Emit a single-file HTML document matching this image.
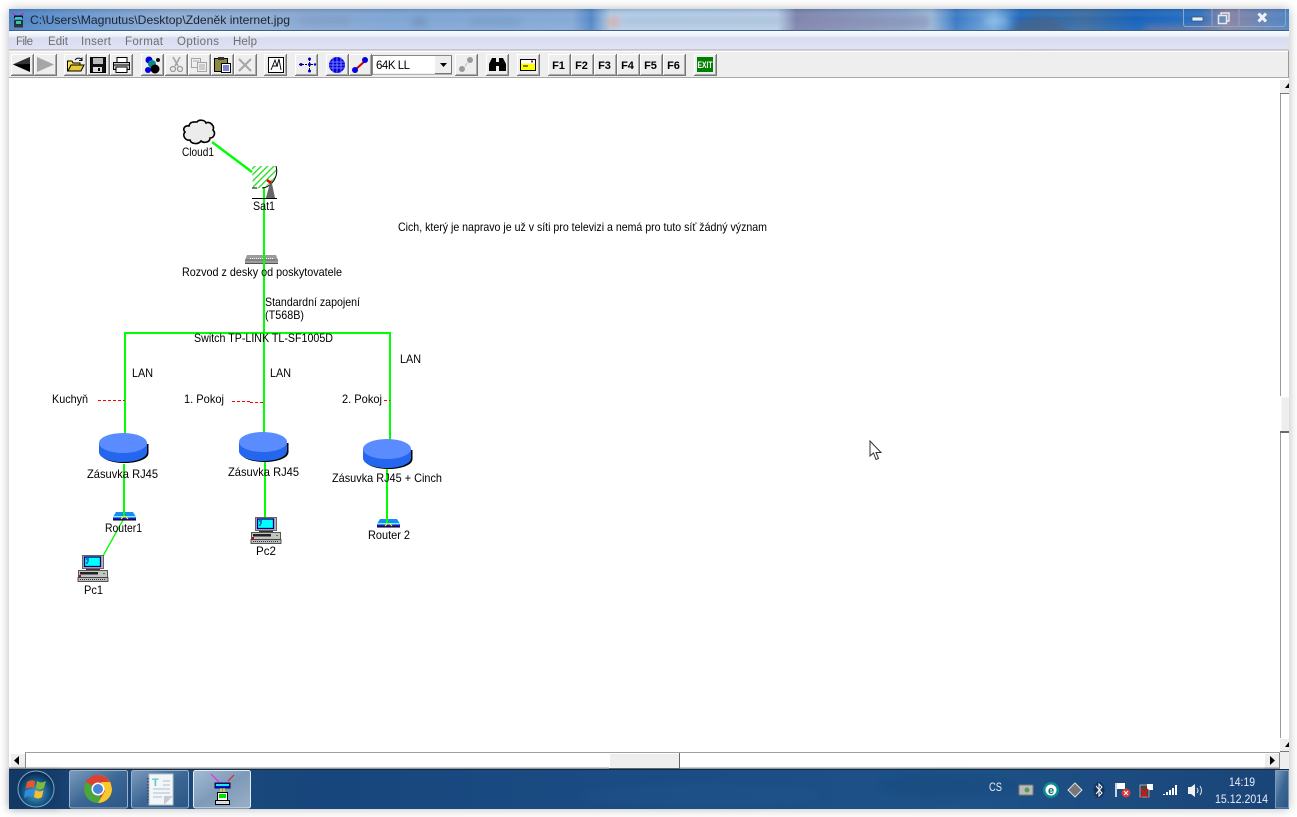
<!DOCTYPE html>
<html><head><meta charset="utf-8"><title>Network diagram</title>
<style>
html,body{margin:0;padding:0;background:#fff;width:1297px;height:817px;overflow:hidden}
#shadow{position:absolute;left:9px;top:9px;width:1280px;height:800px;box-shadow:0 0 10px rgba(0,0,0,.28)}
svg{position:absolute;left:0;top:0}
text{font-family:"Liberation Sans",sans-serif;font-size:11px;fill:#000;white-space:pre}
.d{font-size:11.6px}
.m{fill:#6f6f6f;font-size:11.5px}
.f{font-size:11px;font-weight:bold;text-anchor:middle}
.t{fill:#e8eef6;font-size:12px}
</style></head><body>
<div id="shadow"></div>
<svg width="1297" height="817" viewBox="0 0 1297 817" xmlns="http://www.w3.org/2000/svg">
<defs>
<linearGradient id="tb" x1="0" x2="1" y1="0" y2="0">
<stop offset="0" stop-color="#4a82c4"/><stop offset=".06" stop-color="#6c99d0"/><stop offset=".13" stop-color="#92aed4"/><stop offset=".2" stop-color="#8dabd2"/><stop offset=".3" stop-color="#7fa5d4"/><stop offset=".44" stop-color="#86aad6"/><stop offset=".455" stop-color="#5488c6"/><stop offset=".47" stop-color="#b5cfe9"/><stop offset=".6" stop-color="#b8cfe7"/><stop offset=".615" stop-color="#7e84ac"/><stop offset=".7" stop-color="#8ea8cc"/><stop offset=".72" stop-color="#9dbad9"/><stop offset=".74" stop-color="#3a7ac6"/><stop offset=".77" stop-color="#74a8dc"/><stop offset=".79" stop-color="#2069bd"/><stop offset=".84" stop-color="#3d6c9f"/><stop offset=".88" stop-color="#1763bb"/><stop offset=".93" stop-color="#2a70c0"/><stop offset=".95" stop-color="#8d84a0"/><stop offset="1" stop-color="#4f84c4"/>
</linearGradient>
<linearGradient id="tbv" x1="0" x2="0" y1="0" y2="1"><stop offset="0" stop-color="#10407a" stop-opacity=".22"/><stop offset=".4" stop-color="#fff" stop-opacity="0"/><stop offset="1" stop-color="#fff" stop-opacity=".08"/></linearGradient>
<linearGradient id="mn" x1="0" x2="0" y1="0" y2="1"><stop offset="0" stop-color="#fbfcfe"/><stop offset=".3" stop-color="#e9edf8"/><stop offset=".35" stop-color="#d7dcf0"/><stop offset="1" stop-color="#dfe3f3"/></linearGradient>
<linearGradient id="task" x1="0" x2="1" y1="0" y2="0"><stop offset="0" stop-color="#143a68"/><stop offset=".1" stop-color="#1c4a7e"/><stop offset=".25" stop-color="#17467c"/><stop offset=".5" stop-color="#1a4c83"/><stop offset=".75" stop-color="#1d5288"/><stop offset="1" stop-color="#1a4477"/></linearGradient>
<linearGradient id="tbtn" x1="0" x2="1" y1="0" y2="1"><stop offset="0" stop-color="#7c9cbd"/><stop offset=".5" stop-color="#3c6794"/><stop offset="1" stop-color="#2a5688"/></linearGradient>
<linearGradient id="tbtna" x1="0" x2="1" y1="0" y2="1"><stop offset="0" stop-color="#a4bbd2"/><stop offset=".5" stop-color="#7d9ab8"/><stop offset="1" stop-color="#9ab0c6"/></linearGradient>
<radialGradient id="orb" cx=".5" cy=".6" r=".55"><stop offset="0" stop-color="#4fa5c8"/><stop offset=".7" stop-color="#114e7e"/><stop offset="1" stop-color="#0c2c50"/></radialGradient>
<filter id="bl" x="-30%" y="-100%" width="160%" height="300%"><feGaussianBlur stdDeviation="3.5"/></filter>
<pattern id="hatch" width="4.5" height="4.500" patternUnits="userSpaceOnUse" patternTransform="rotate(-45)"><rect width="4.500" height="4.500" fill="#fff"/><rect width="4.500" height="1.400" fill="#30dc30"/></pattern>

<g id="b">
<rect width="23" height="22" fill="#eee"/>
<path d="M0 21.500H23M22.500 0V22" stroke="#777" fill="none"/>
<path d="M1 20.500H22M21.500 1V21" stroke="#aaa" fill="none"/>
<path d="M.5 21V.5H22" stroke="#fff" fill="none"/>
</g>

<g id="pc">
<rect x="4.500" y=".5" width="21" height="13" fill="#b8b8b8" stroke="#666"/>
<rect x="6.500" y="2" width="16" height="9.500" fill="#00ffff" stroke="#000080" stroke-width="1.300"/>
<path d="M8 4h3M9 6h2M8 8h2" stroke="#000080"/>
<rect x="8" y="14" width="14" height="1.500" fill="#333"/>
<rect x="0.500" y="15.500" width="29" height="7" fill="#c4c4c4" stroke="#555"/>
<rect x="2" y="17" width="18" height="2.500" fill="#222"/>
<rect x="1" y="20" width="2" height="2" fill="#c00"/>
<rect x="25" y="18" width="2" height="1" fill="#0a0"/>
<rect x="0" y="22.500" width="30" height="4" fill="#bbb" stroke="#333" stroke-width=".8"/>
<path d="M2 24.500H28" stroke="#333" stroke-dasharray="1 1"/>
</g>

<g id="rt">
<path d="M3 0H20L23 5H0Z" fill="#1a8cf0"/>
<rect x="0" y="4" width="23" height="1.500" fill="#6ff"/>
<rect x="0" y="5.500" width="23" height="3" fill="#2a10c8"/>
<rect x="0" y="7.500" width="23" height="1" fill="#000"/>
<path d="M8 7l2-2h3l2 2" stroke="#ff0" fill="none"/>
</g>

<g id="cup">
<path d="M0 10V19C0 25 11 29 24 29S48 25 48 19V10Z" fill="#000" transform="translate(1.500,1)"/>
<path d="M0 10V19C0 25 11 29 24 29S48 25 48 19V10Z" fill="#2466ee"/>
<ellipse cx="24" cy="10" rx="24" ry="10" fill="#5a8cff"/>
</g>
</defs>

<!-- window base -->
<rect x="9" y="9" width="1280" height="800" fill="#fff"/>

<!-- title bar -->
<rect x="9" y="9" width="1280" height="22" fill="url(#tb)"/>
<rect x="9" y="9" width="1280" height="22" fill="url(#tbv)"/>
<g filter="url(#bl)" opacity=".55">
<rect x="300" y="16" width="50" height="9" fill="#7f98bd"/>
<rect x="412" y="17" width="14" height="10" fill="#6e8ab0"/>
<rect x="470" y="18" width="50" height="7" fill="#7594bf"/>
<rect x="607" y="17" width="12" height="10" fill="#e89a80"/>
<rect x="622" y="18" width="160" height="6" fill="#a0b4cc"/>
<rect x="800" y="16" width="130" height="12" fill="#8a8bb0"/>
<ellipse cx="1038" cy="32" rx="28" ry="15" fill="#4f5f75"/>
<rect x="985" y="17" width="22" height="8" fill="#a3cdf0"/>
<rect x="1145" y="27" width="70" height="5" fill="#c08078"/>
</g>
<path d="M1183.500 9V24Q1183.500 26.500 1186 26.500H1283Q1285.500 26.500 1285.500 24V9M1212 9V26M1239 9V26" fill="none" stroke="#8da6c6"/>
<rect x="1192" y="17" width="11" height="4" fill="#e8eef5" stroke="#3d5572" stroke-width=".8"/>
<rect x="1221" y="13" width="8" height="8" fill="none" stroke="#e4eaf2" stroke-width="1.500"/>
<rect x="1218.500" y="15.500" width="8" height="8" fill="#6a8cb5" stroke="#e4eaf2" stroke-width="1.500"/>
<path d="M1258.500 13.500L1266 21.500M1266 13.500L1258.500 21.500" stroke="#eef3f8" stroke-width="3"/>
<!-- app icon -->
<path d="M12 13l5 3M24 13l-5 3" stroke="#d020d0"/>
<rect x="14" y="15.500" width="9" height="3" fill="#111"/>
<rect x="15" y="17" width="7" height="2" fill="#29c7d0"/>
<rect x="14" y="20" width="9" height="5" fill="#234"/>
<rect x="16" y="21" width="5" height="3" fill="#3c9"/>
<rect x="14" y="25" width="9" height="2.500" fill="#333"/>
<text x="30" y="24" style="font-size:12px;fill:#1c2430" textLength="260" lengthAdjust="spacingAndGlyphs">C:\Users\Magnutus\Desktop\Zdeněk internet.jpg</text>

<!-- menu -->
<rect x="9" y="31" width="1280" height="19" fill="url(#mn)"/>
<rect x="9" y="30" width="1280" height="1" fill="#3d5f8c"/>
<rect x="9" y="49.500" width="1280" height="1" fill="#aaa"/>
<text class="m" x="16" y="45" textLength="17">File</text>
<text class="m" x="48" y="45" textLength="20">Edit</text>
<text class="m" x="81" y="45" textLength="30">Insert</text>
<text class="m" x="125" y="45" textLength="38">Format</text>
<text class="m" x="177" y="45" textLength="42">Options</text>
<text class="m" x="233" y="45" textLength="24">Help</text>

<!-- toolbar -->
<rect x="9" y="51" width="1280" height="26" fill="#eee"/>
<rect x="9" y="51" width="1280" height="1" fill="#fff"/>
<rect x="9" y="77" width="1280" height="1" fill="#a8a8a8"/>
<rect x="1288" y="51" width="1" height="27" fill="#999"/>

<use href="#b" x="11" y="54"/><use href="#b" x="34" y="54"/>
<path d="M13 64.500L30 57V72Z" fill="#000"/><path d="M13 64.500L30 57V64Z" fill="#333"/>
<path d="M54 64.500L37 57V72Z" fill="#a6a6a6"/>

<use href="#b" x="64" y="54"/><use href="#b" x="87" y="54"/><use href="#b" x="110" y="54"/>
<path d="M67.500 71V61H72L73 63H80V71Z" fill="#ffe24a" stroke="#000"/>
<path d="M68 71L71 65H84L81 71Z" fill="#e9c930" stroke="#000"/>
<path d="M75 60C77 57.500 80 57.500 82 60M82 57.500V60.500H79" fill="none" stroke="#000"/>
<rect x="90.500" y="57.500" width="15" height="15" fill="#111" stroke="#000"/>
<rect x="93" y="58" width="10" height="6" fill="#bbb"/>
<rect x="93" y="67" width="9" height="5" fill="#ddd"/>
<rect x="98" y="68" width="2" height="3" fill="#000"/>
<rect x="117" y="57.500" width="10" height="5" fill="#fff" stroke="#000"/>
<path d="M113.500 62.500H129.500V69.500H113.500Z" fill="#ccc" stroke="#000"/>
<rect x="116" y="67" width="11" height="5.500" fill="#fff" stroke="#000"/>
<path d="M114 65H129" stroke="#000"/>

<use href="#b" x="141" y="54"/><use href="#b" x="165" y="54"/><use href="#b" x="188" y="54"/><use href="#b" x="211" y="54"/><use href="#b" x="234" y="54"/>
<circle cx="149" cy="60" r="3.500" fill="#0000e0"/><circle cx="158" cy="60" r="2" fill="#111"/><circle cx="152" cy="64" r="4" fill="#0a8a8a"/><circle cx="148" cy="70" r="3" fill="#0000e0"/><circle cx="155" cy="69" r="4.500" fill="#000"/>
<path d="M173 57L178 66M180 57L175 66" stroke="#a0a0a0" stroke-width="1.500"/><circle cx="173" cy="69" r="2.500" fill="none" stroke="#999" stroke-width="1.300"/><circle cx="180" cy="69" r="2.500" fill="none" stroke="#999" stroke-width="1.300"/>
<rect x="191.500" y="58.500" width="9" height="9" fill="#eee" stroke="#a5a5a5"/><rect x="197.500" y="62.500" width="9" height="9" fill="#eee" stroke="#a5a5a5"/><path d="M199 65h6M199 67h6M199 69h6M193 61h6" stroke="#aaa"/>
<rect x="214.500" y="58.500" width="13" height="13" fill="#8a8a40" stroke="#000"/><rect x="218" y="57" width="6" height="3" fill="#333"/><rect x="221.500" y="63.500" width="9" height="9" fill="#fff" stroke="#000"/><path d="M223 66h6M223 68h6M223 70h6" stroke="#00a"/>
<path d="M239 59L251 71M251 59L239 71" stroke="#a6a6a6" stroke-width="2"/>

<use href="#b" x="264" y="54"/><use href="#b" x="295" y="54"/>
<rect x="268.500" y="57.500" width="15" height="15" fill="#fff" stroke="#000"/>
<path d="M271 70L275 60L277 66M277 66L279 59L281 70M273 66H278" fill="none" stroke="#000" stroke-width=".9"/>
<path d="M299 64.500H315M309.500 59V72" stroke="#000" stroke-dasharray="2 1"/><circle cx="309.500" cy="64.500" r="1.500" fill="#00c"/><circle cx="301" cy="64.500" r="1.500" fill="#00c"/><circle cx="309.500" cy="59" r="1.500" fill="#00c"/><circle cx="309.500" cy="71" r="1.500" fill="#00c"/><circle cx="315" cy="64.500" r="1.200" fill="#00c"/>

<use href="#b" x="326" y="54"/><use href="#b" x="349" y="54"/>
<circle cx="337" cy="65" r="8" fill="#0000e0"/><path d="M329 62H345M329 65H345M329 68H345M333 57V73M337 57V73M341 57V73" stroke="#9aa0ff" stroke-width=".7"/>
<path d="M355 70L366 60" stroke="#d00000" stroke-width="2"/><circle cx="355" cy="70" r="3" fill="#0000e0"/><circle cx="365" cy="60" r="3" fill="#0000e0"/>

<!-- combo -->
<rect x="372.500" y="55.500" width="79" height="19" fill="#fff" stroke="#888"/>
<rect x="373" y="73.500" width="79" height="1" fill="#ddd"/>
<text x="376" y="69" style="font-size:11.500px" textLength="34">64K LL</text>
<rect x="435" y="56" width="16" height="18" fill="#eee"/>
<path d="M435 73.500H451.500V56" stroke="#777" fill="none"/>
<path d="M440 63H447L443.500 67Z" fill="#000"/>

<use href="#b" x="455" y="54"/>
<circle cx="470" cy="60" r="3" fill="#9a9a9a"/><circle cx="462" cy="69" r="3" fill="#9a9a9a"/><path d="M465 66.500L467 63" stroke="#bbb"/>

<use href="#b" x="486" y="54"/><use href="#b" x="517" y="54"/>
<path d="M489 71V64L492 58H496V62H499V58H503L506 64V71H499V66H496V71Z" fill="#000"/>
<rect x="520.500" y="59.500" width="15" height="11" fill="#ffff00" stroke="#000"/>
<rect x="521" y="60" width="14" height="3.500" fill="#fff"/>
<rect x="531" y="60.500" width="2" height="2" fill="#a000a0"/>
<path d="M523 66h5" stroke="#000"/>

<use href="#b" x="548" y="54"/><use href="#b" x="571" y="54"/><use href="#b" x="594" y="54"/><use href="#b" x="617" y="54"/><use href="#b" x="640" y="54"/><use href="#b" x="663" y="54"/>
<text class="f" x="558.500" y="69">F1</text><text class="f" x="581.500" y="69">F2</text><text class="f" x="604.500" y="69">F3</text><text class="f" x="627.500" y="69">F4</text><text class="f" x="650.500" y="69">F5</text><text class="f" x="673.500" y="69">F6</text>

<use href="#b" x="694" y="54"/>
<rect x="697" y="57" width="16" height="15" fill="#008000"/>
<text x="697.500" y="68" style="font-size:9.500px;font-weight:bold;fill:#fff" textLength="15" lengthAdjust="spacingAndGlyphs">EXIT</text>

<!-- vertical scrollbar -->
<rect x="1280" y="78" width="9" height="674" fill="#fff"/>
<rect x="1280" y="94" width="1" height="658" fill="#999"/>
<rect x="1280" y="79" width="9" height="15" fill="#eee"/>
<rect x="1280" y="79" width="9" height="1" fill="#fff"/>
<rect x="1280" y="93" width="9" height="1" fill="#777"/>
<path d="M1289 83V88H1285Z" fill="#000"/>
<rect x="1280" y="396" width="9" height="36" fill="#eee"/>
<rect x="1280" y="396" width="9" height="1.500" fill="#fff"/>
<rect x="1280" y="396" width="1.500" height="36" fill="#fff"/>
<rect x="1280" y="431" width="9" height="2" fill="#6a6a6a"/>
<rect x="1280" y="738" width="9" height="14" fill="#eee"/>
<rect x="1280" y="738" width="9" height="1" fill="#fff"/>
<rect x="1280" y="751" width="9" height="1" fill="#777"/>
<path d="M1289 742V747H1285Z" fill="#000"/>

<!-- horizontal scrollbar -->
<rect x="9" y="752" width="1280" height="17" fill="#fff"/>
<rect x="25" y="752" width="1255" height="1" fill="#a0a0a0"/>
<rect x="9" y="767.500" width="1271" height="1.500" fill="#999"/>
<rect x="10" y="753" width="15" height="15" fill="#eee"/>
<path d="M10.500 768V753.500H25" stroke="#fff" fill="none"/><path d="M25.500 753V768H10" stroke="#888" fill="none"/>
<path d="M14 760.500L19 756V765Z" fill="#000"/>
<rect x="609" y="753" width="70" height="15" fill="#eee"/>
<path d="M609.500 768V753.500H679" stroke="#fff" fill="none"/><path d="M679.500 753V768.500H609" stroke="#666" fill="none"/>
<rect x="1264" y="753" width="15" height="15" fill="#eee"/>
<path d="M1264.500 768V753.500H1279" stroke="#fff" fill="none"/><path d="M1279.500 753V768H1264" stroke="#888" fill="none"/>
<path d="M1275 760.500L1270 756V765Z" fill="#000"/>
<rect x="1280" y="752" width="9" height="17" fill="#eee"/>

<!-- satellite (under the lines) -->
<path d="M252 166H276C279 176 272 188 253 189Z" fill="url(#hatch)"/>

<!-- diagram lines -->
<g stroke="#00ff00" stroke-width="2" fill="none">
<path d="M212 142L252 172" stroke-width="2.400"/>
<path d="M264 187V436"/>
<path d="M125 436V333H390V440"/>
<path d="M124 464V512"/>
<path d="M265 461V517"/>
<path d="M387 467V519"/>
<path d="M123 520L103 556" stroke-width="1.300"/>
</g>
<g stroke="#ff0000" stroke-width="1" fill="none" stroke-dasharray="3 2" shape-rendering="crispEdges">
<path d="M98 400.500H125"/>
<path d="M232 401.500H250"/>
<path d="M250 402.500H264"/>
<path d="M384 400.500H390"/>
</g>

<!-- cloud -->
<path d="M189 126C190 121 195 122 197 122C199 119 205 120 206 123C210 121 215 126 213 130C216 133 214 138 210 138C210 143 203 143 201 141C198 145 191 144 190 140C185 141 182 135 185 132C182 129 185 125 189 126Z" fill="#ececec" stroke="#000" stroke-width="1.600"/>

<!-- satellite -->
<path d="M276 166C279 176 272 187 262 188M252 188H257" fill="none" stroke="#000"/>
<path d="M271 179L266 198H275Z" fill="#666"/>
<path d="M267 180L271 183" stroke="#e00000" stroke-width="2.500"/>
<path d="M252 198.500H277" stroke="#000"/>

<!-- hub -->
<path d="M247 255H276L278 260V264H245V260Z" fill="#9c9c9c"/>
<path d="M245 260H278" stroke="#6a6a6a"/>
<path d="M250 258.500H273" stroke="#fff" stroke-dasharray="1 1"/>
<path d="M245 263.500H278" stroke="#555"/>
<path d="M264 255V264" stroke="#00ff00" stroke-width="2"/>

<!-- sockets -->
<use href="#cup" x="99" y="433"/>
<use href="#cup" x="239" y="432"/>
<use href="#cup" x="363" y="439"/>

<!-- devices -->
<use href="#rt" x="113" y="512"/>
<use href="#rt" x="377" y="519"/>
<use href="#pc" x="78" y="555"/>
<use href="#pc" x="251" y="517"/>
<path d="M124 505V516" stroke="#0f0" stroke-width="2"/>
<path d="M387 510V523" stroke="#0f0" stroke-width="2"/>

<!-- labels -->
<text class="d" x="182" y="156" textLength="32" lengthAdjust="spacingAndGlyphs">Cloud1</text>
<text class="d" x="253" y="210" textLength="22" lengthAdjust="spacingAndGlyphs">Sat1</text>
<text class="d" x="182" y="276" textLength="160" lengthAdjust="spacingAndGlyphs">Rozvod z desky od poskytovatele</text>
<text class="d" x="398" y="231" textLength="369" lengthAdjust="spacingAndGlyphs">Cich, který je napravo je už v síti pro televizi a nemá pro tuto síť žádný význam</text>
<text class="d" x="265" y="306" textLength="95" lengthAdjust="spacingAndGlyphs">Standardní zapojení</text>
<text class="d" x="265" y="319" textLength="39" lengthAdjust="spacingAndGlyphs">(T568B)</text>
<text class="d" x="194" y="342" textLength="139" lengthAdjust="spacingAndGlyphs">Switch TP-LINK TL-SF1005D</text>
<text class="d" x="132" y="377" textLength="21" lengthAdjust="spacingAndGlyphs">LAN</text>
<text class="d" x="270" y="377" textLength="21" lengthAdjust="spacingAndGlyphs">LAN</text>
<text class="d" x="400" y="363" textLength="21" lengthAdjust="spacingAndGlyphs">LAN</text>
<text class="d" x="52" y="403" textLength="36" lengthAdjust="spacingAndGlyphs">Kuchyň</text>
<text class="d" x="184" y="403" textLength="40" lengthAdjust="spacingAndGlyphs">1. Pokoj</text>
<text class="d" x="342" y="403" textLength="40" lengthAdjust="spacingAndGlyphs">2. Pokoj</text>
<text class="d" x="87" y="478" textLength="71" lengthAdjust="spacingAndGlyphs">Zásuvka RJ45</text>
<text class="d" x="228" y="476" textLength="71" lengthAdjust="spacingAndGlyphs">Zásuvka RJ45</text>
<text class="d" x="332" y="482" textLength="110" lengthAdjust="spacingAndGlyphs">Zásuvka RJ45 + Cinch</text>
<text class="d" x="105" y="532" textLength="37" lengthAdjust="spacingAndGlyphs">Router1</text>
<text class="d" x="368" y="539" textLength="42" lengthAdjust="spacingAndGlyphs">Router 2</text>
<text class="d" x="256" y="555" textLength="20" lengthAdjust="spacingAndGlyphs">Pc2</text>
<text class="d" x="84" y="594" textLength="19" lengthAdjust="spacingAndGlyphs">Pc1</text>

<!-- cursor -->
<path d="M870 441V456L873.500 453L876 459.500L878.500 458.500L876 452.500H881Z" fill="#fff" stroke="#333" stroke-width="1"/>

<!-- taskbar -->
<rect x="9" y="769" width="1280" height="40" fill="url(#task)"/>
<rect x="9" y="769" width="1280" height="1" fill="#0e2a4c"/>
<g filter="url(#bl)" opacity=".18">
<rect x="9" y="770" width="50" height="39" fill="#0e2c52"/>
<ellipse cx="700" cy="795" rx="120" ry="12" fill="#2a6094"/>
<ellipse cx="950" cy="785" rx="70" ry="12" fill="#10406f"/>
</g>
<circle cx="36" cy="789" r="18" fill="url(#orb)" stroke="#7fa9c5"/>
<path d="M27 782Q31 779 35 781L34 788Q30 786 25.500 789Z" fill="#e8562a"/>
<path d="M37 781Q41 784 46 781L44 788Q40 791 36 788Z" fill="#7fbb3a"/>
<path d="M25 791Q29 788 33.500 790L32 797Q28 795 24 798Z" fill="#2f8bdc"/>
<path d="M35.500 790Q40 793 43.500 790L42 797Q38 800 34 797Z" fill="#f6c02c"/>
<rect x="69.500" y="770.500" width="58" height="37.500" rx="2" fill="url(#tbtn)" stroke="#9bb2c8"/>
<rect x="131.500" y="770.500" width="57" height="37.500" rx="2" fill="url(#tbtn)" stroke="#9bb2c8"/>
<rect x="193.500" y="770.500" width="57" height="37.500" rx="2" fill="url(#tbtna)" stroke="#e4ecf3"/>
<!-- chrome -->
<circle cx="98" cy="789" r="14" fill="#dc4030"/>
<path d="M98 789L85.900 782A14 14 0 0 0 98 803A14 14 0 0 0 102 802.500Z" fill="#4aa53e"/>
<path d="M98 775A14 14 0 0 1 110.500 782.500L112 789A14 14 0 0 1 98 803L105 791Z" fill="#f6c92e"/>
<path d="M85.900 782A14 14 0 0 1 110.100 782L98 782Z" fill="#dc4030"/>
<circle cx="98" cy="789" r="6.500" fill="#fff"/><circle cx="98" cy="789" r="5" fill="#4a86d8"/>
<!-- notes -->
<rect x="149" y="774" width="24" height="31" fill="#f3f6f8" stroke="#b8c0c8"/>
<path d="M148 778V803" stroke="#445" stroke-width="1.500" stroke-dasharray="1.500 1.500"/>
<path d="M163 781H170M163 785H170M153 789H170M153 793H170M153 797H162" stroke="#a8c0d0"/>
<text x="152" y="786" style="font-size:11px;font-weight:bold;fill:#5ac8cc">T</text>
<path d="M173 796L164 805V796Z" fill="#c8ccd0"/>
<!-- app -->
<path d="M211 774L219 782" stroke="#ff10ff"/><path d="M228 781L234 775" stroke="#ff1010"/>
<rect x="215" y="783" width="15" height="5" fill="#00f" stroke="#111"/><rect x="216" y="784" width="13" height="2" fill="#18e8f0"/>
<path d="M221 788V792M224 788V792" stroke="#ff0"/>
<rect x="217.500" y="792.500" width="10" height="8" fill="#fff" stroke="#000"/><rect x="219" y="794" width="7" height="4" fill="#00e000"/>
<rect x="215.500" y="800.500" width="14" height="4" fill="#ddd" stroke="#000"/>

<!-- tray -->
<text class="t" x="989" y="791" textLength="13" lengthAdjust="spacingAndGlyphs">CS</text>
<rect x="1019" y="785" width="14" height="10" rx="1" fill="#b8bcb8" stroke="#7a7a7a"/><circle cx="1027" cy="790" r="2.500" fill="#5a9a5a"/>
<circle cx="1051" cy="790" r="8" fill="#0d8c94"/><circle cx="1051" cy="790" r="5.500" fill="#fff"/><text x="1051" y="794" text-anchor="middle" style="font-size:11px;font-weight:bold;fill:#0d6c74">e</text>
<path d="M1075 783L1082 790L1075 797L1068 790Z" fill="#777" stroke="#ddd"/>
<ellipse cx="1099" cy="790" rx="5.500" ry="8" fill="#14325e"/><path d="M1096 786L1102 793L1099 796V784L1102 787L1096 794" fill="none" stroke="#fff"/>
<path d="M1116 783V797" stroke="#fff" stroke-width="1.500"/><path d="M1117 783H1125V789H1117Z" fill="#fff"/>
<circle cx="1126" cy="793" r="4.500" fill="#d8383a"/><path d="M1124 791L1128 795M1128 791L1124 795" stroke="#fff"/>
<rect x="1140" y="785" width="9" height="12" fill="#444" stroke="#ccc" stroke-width=".7"/><rect x="1147" y="784" width="6" height="6" fill="#fff"/><path d="M1141 789L1148 797M1148 789L1141 797" stroke="#e01010" stroke-width="1.800"/>
<path d="M1164 795v-1M1167 795v-3M1170 795v-5M1173 795v-7M1176 795v-10" stroke="#fff" stroke-width="2" fill="none"/>
<path d="M1188 787H1191L1195 784V797L1191 794H1188Z" fill="#f0f0f0"/><path d="M1197 788Q1199 790.500 1197 793M1200 786Q1203 790.500 1200 795" stroke="#e0e0e0" fill="none"/>
<text class="t" x="1229" y="786" textLength="26" lengthAdjust="spacingAndGlyphs">14:19</text>
<text class="t" x="1215" y="803" textLength="53" lengthAdjust="spacingAndGlyphs">15.12.2014</text>
<rect x="1275.500" y="770.500" width="13" height="37.500" fill="url(#tbtn)" stroke="#7c99b8"/>
</svg>
</body></html>
